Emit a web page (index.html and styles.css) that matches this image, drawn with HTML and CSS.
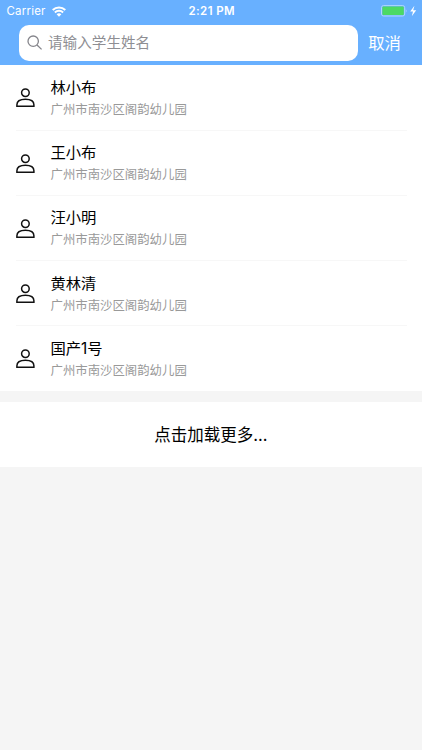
FILE: index.html
```html
<!DOCTYPE html>
<html lang="zh-CN">
<head>
    <meta charset="UTF-8">
    <meta name="viewport" content="width=device-width, initial-scale=1.0">
    <title>搜索学生</title>
    <link rel="stylesheet" href="styles.css">
</head>
<body>
    <!-- Icon shared by the list rows -->
    <svg class="symbols">
        <symbol id="person" viewBox="0 0 19 19">
            <circle cx="9.4" cy="4.7" r="3.8"/>
            <path d="M0.9 18.2 V16.8 C0.9 13.3 4.5 11.3 9.4 11.3 S17.9 13.3 17.9 16.8 V18.2 Z"/>
        </symbol>
    </svg>

    <header class="header">
        <div class="status-bar">
            <div class="carrier">
                <span>Carrier</span>
                <svg class="wifi" viewBox="0 0 14 11">
                    <path d="M0.7 4 C4.2 0.5 9.8 0.5 13.3 4"/>
                    <path d="M2.9 6.5 C5.2 4.3 8.8 4.3 11.1 6.5"/>
                    <path class="wifi-dot" d="M4.6 8.2 C6 7 8 7 9.4 8.2 L7 10.7 Z"/>
                </svg>
            </div>
            <span class="time">2:21 PM</span>
            <svg class="battery" viewBox="0 0 37 12">
                <rect class="battery-case" x="1.5" y="0.6" width="23.2" height="10.4" rx="2"/>
                <rect class="battery-level" x="2.4" y="1.5" width="21.4" height="8.6" rx="1"/>
                <path class="battery-tip" d="M25.8 4 Q27.6 5.9 25.8 7.8 Z"/>
                <path class="bolt" d="M34.4 0.8 L30.2 6.5 H33 L31.8 11.2 L36.2 5.3 H33.2 Z"/>
            </svg>
        </div>
        <div class="search-bar">
            <label class="search-box">
                <svg class="search-icon" viewBox="0 0 16 16">
                    <circle cx="6.2" cy="6.2" r="5.2"/>
                    <path d="M10 10 L14.6 14.4"/>
                </svg>
                <input class="search-input" type="text" placeholder="请输入学生姓名">
            </label>
            <button class="cancel" type="button">取消</button>
        </div>
    </header>

    <ul class="student-list">
        <li class="student">
            <svg class="person"><use href="#person"/></svg>
            <div class="info">
                <div class="name">林小布</div>
                <div class="school">广州市南沙区阁韵幼儿园</div>
            </div>
        </li>
        <li class="student">
            <svg class="person"><use href="#person"/></svg>
            <div class="info">
                <div class="name">王小布</div>
                <div class="school">广州市南沙区阁韵幼儿园</div>
            </div>
        </li>
        <li class="student">
            <svg class="person"><use href="#person"/></svg>
            <div class="info">
                <div class="name">汪小明</div>
                <div class="school">广州市南沙区阁韵幼儿园</div>
            </div>
        </li>
        <li class="student">
            <svg class="person"><use href="#person"/></svg>
            <div class="info">
                <div class="name">黄林清</div>
                <div class="school">广州市南沙区阁韵幼儿园</div>
            </div>
        </li>
        <li class="student">
            <svg class="person"><use href="#person"/></svg>
            <div class="info">
                <div class="name">国产1号</div>
                <div class="school">广州市南沙区阁韵幼儿园</div>
            </div>
        </li>
    </ul>

    <button class="load-more" type="button">点击加载更多...</button>
</body>
</html>
```
FILE: styles.css
```css
* {
    box-sizing: border-box;
}
body {
    margin: 0;
    min-height: 100vh;
    background: #f5f5f5;
    font-family: Inter, "Noto Sans CJK SC", sans-serif;
    color: #000;
}
button {
    padding: 0;
    border: none;
    background: none;
    font-family: inherit;
    cursor: pointer;
}
.symbols {
    display: none;
}

/* Header */
.header {
    height: 65.4px;
    background: #68b0ff;
    color: #fff;
}
.status-bar {
    display: grid;
    grid-template-columns: 1fr auto 1fr;
    align-items: center;
    height: 22px;
    padding: 0 5px 0 6.5px;
    font-size: 11.5px;
    line-height: 22px;
}
.carrier {
    display: flex;
    align-items: center;
    gap: 6px;
    letter-spacing: 0.2px;
}
.wifi {
    width: 14px;
    height: 11px;
    fill: none;
    stroke: #fff;
    stroke-width: 2;
}
.wifi .wifi-dot {
    fill: #fff;
    stroke: none;
}
.time {
    font-weight: 600;
    letter-spacing: 0.4px;
}
.battery {
    justify-self: end;
    width: 37px;
    height: 12px;
}
.battery-case {
    fill: none;
    stroke: #b0d6ff;
    stroke-width: 1;
}
.battery-level {
    fill: #4cd964;
}
.battery-tip {
    fill: #b0d6ff;
}
.bolt {
    fill: #fff;
}
.search-bar {
    display: flex;
    align-items: center;
    height: 43.4px;
    padding: 3px 21px 4px 19px;
    gap: 10px;
}
.search-box {
    display: flex;
    align-items: center;
    flex: 1;
    height: 36.5px;
    padding: 0 7.5px;
    gap: 5.5px;
    border-radius: 10px;
    background: #fff;
}
.search-icon {
    flex: none;
    width: 16px;
    height: 16px;
    fill: none;
    stroke: #85858b;
    stroke-width: 1.3;
}
.search-input {
    flex: 1;
    min-width: 0;
    height: 24px;
    padding: 0;
    border: none;
    outline: none;
    background: none;
    font-family: inherit;
    font-size: 14.6px;
}
.search-input::placeholder {
    color: #8e8e93;
}
.cancel {
    color: #fff;
    font-size: 16.4px;
    line-height: 24px;
}

/* Student list */
.student-list {
    margin: 0;
    padding: 0 15px 0 16px;
    list-style: none;
    background: #fff;
}
.student {
    display: flex;
    align-items: center;
    gap: 15.5px;
    height: 65.2px;
    padding-top: 1px;
    border-bottom: 1px solid #f7f7f7;
}
.student:last-child {
    padding-top: 0;
    border-bottom: none;
}
.person {
    width: 19px;
    height: 19px;
    fill: none;
    stroke: #111;
    stroke-width: 1.5;
}
.name {
    font-size: 15.3px;
    line-height: 23px;
}
.school {
    color: #999;
    font-size: 12.4px;
    line-height: 21px;
}
.load-more {
    display: block;
    width: 100%;
    height: 65.4px;
    margin-top: 10.4px;
    background: #fff;
    color: #000;
    font-size: 16.5px;
}
```
